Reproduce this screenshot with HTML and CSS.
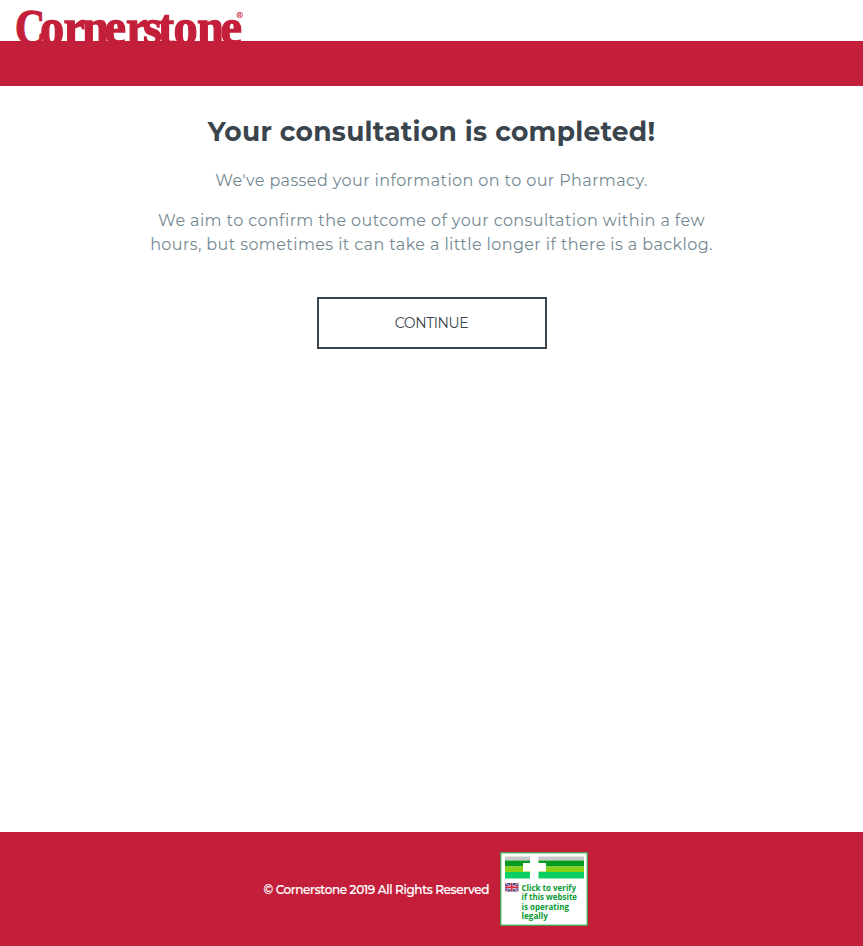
FILE: index.html
```html
<!DOCTYPE html>
<html lang="en">
<head>
<meta charset="utf-8">
<title>Cornerstone</title>
<link rel="stylesheet" href="styles.css">
</head>
<body>
<header class="header">
  <svg class="logo" width="240" height="41" viewBox="0 0 240 41" role="img" aria-label="Cornerstone">
    <text class="wordmark" transform="scale(.82 1)" x="13.500" y="43.500">C</text>
    <text class="wordmark" transform="scale(.95 1)" y="43.500" x="37.900 62.700 82.100 105.800 128.400 146.300 162.200 178.500 203.200 228">ornerstone</text>
    <circle class="registered-ring" cx="235.700" cy="15" r="2.800"/>
    <text class="registered" x="235.700" y="16.800">R</text>
  </svg>
</header>
<div class="band"></div>
<main class="content">
  <h1 class="title">Your consultation is completed!</h1>
  <p class="lead">We've passed your information on to our Pharmacy.</p>
  <p class="lead">We aim to confirm the outcome of your consultation within a few<br>hours, but sometimes it can take a little longer if there is a backlog.</p>
  <button class="continue" type="button">CONTINUE</button>
</main>
<footer class="footer">
  <span class="copyright">© Cornerstone 2019 All Rights Reserved</span>
  <svg class="badge" width="88" height="74" viewBox="0 0 88 74">
    <rect x=".75" y=".75" width="86.500" height="72.500" fill="#fff" stroke="#35a84a" stroke-width="1.200"/>
    <path fill="#c8c9c8" d="M5 4.500h79v4H5z"/>
    <path fill="#079a21" d="M5 8.500h79v6H5z"/>
    <path fill="#86d016" d="M5 14.500h79v5.500H5z"/>
    <path fill="#08cf61" d="M5 20h79v6.500H5z"/>
    <path fill="#fff" d="M30 4h8.500v7H46v8.500h-7.500V27H30v-7.500h-7V11h7z"/>
    <path fill="#34458f" d="M5 31h13.500v8.500H5z"/>
    <path stroke="#fff" stroke-width="1.200" d="m5 31 13.500 8.500M18.500 31 5 39.500"/>
    <path stroke="#d53b4d" stroke-width=".7" d="m5 31 13.500 8.500M18.500 31 5 39.500"/>
    <path stroke="#f3dde2" stroke-width="2.400" d="M11.750 31v8.500M5 35.250h13.500"/>
    <path stroke="#d32c40" stroke-width="1.500" d="M11.750 31v8.500M5 35.250h13.500"/>
    <g class="badge-text">
      <text x="21.500" y="38.500" textLength="54.500" lengthAdjust="spacingAndGlyphs">Click to verify</text>
      <text x="21.500" y="48" textLength="55.500" lengthAdjust="spacingAndGlyphs">if this website</text>
      <text x="21.500" y="57.500" textLength="47.500" lengthAdjust="spacingAndGlyphs">is operating</text>
      <text x="21.500" y="67" textLength="26.500" lengthAdjust="spacingAndGlyphs">legally</text>
    </g>
  </svg>
</footer>
</body>
</html>
```
FILE: styles.css
```css
* { box-sizing: border-box; }
body {
  margin: 0;
  min-height: 946px;
  display: flex;
  flex-direction: column;
  background: #fff;
  color: #3a444c;
  font-family: Montserrat, Inter, sans-serif;
}
.header { height: 41px; padding-left: 4px; }
.logo { display: block; overflow: visible; }
.wordmark {
  font: bold 51px "Liberation Serif", serif;
  fill: #c41f3a;
  stroke: #c41f3a;
  stroke-width: 1.3px;
}
.registered { font: bold 4.5px "Liberation Sans", sans-serif; fill: #c41f3a; text-anchor: middle; }
.registered-ring { fill: none; stroke: #c41f3a; stroke-width: .7px; }
.band { height: 45px; background: #c41f3a; }
.content {
  flex: 1;
  display: flex;
  flex-direction: column;
  align-items: center;
  padding-top: 30px;
  text-align: center;
}
.title {
  margin: 0 0 21px;
  font-size: 26.5px;
  line-height: 32px;
  font-weight: 700;
  letter-spacing: .27px;
  white-space: nowrap;
}
.lead {
  margin: 0 0 16px;
  color: #748992;
  font-size: 16px;
  line-height: 24px;
  font-weight: 400;
  letter-spacing: .4px;
  white-space: nowrap;
}
.continue {
  width: 230px;
  height: 52px;
  margin-top: 24px;
  padding: 0;
  border: 2px solid #3a444c;
  background: #fff;
  color: #3a444c;
  font: 400 14px Montserrat, Inter, sans-serif;
  letter-spacing: -.4px;
}
.footer {
  height: 114px;
  display: flex;
  align-items: center;
  justify-content: center;
  gap: 11px;
  padding-right: 12px;
  background: #c41f3a;
  color: #fff;
}
.copyright {
  width: 225px;
  white-space: nowrap;
  font-size: 12px;
  font-weight: 500;
  letter-spacing: -.36px;
  -webkit-text-stroke: .2px #fff;
}
.badge-text { font: bold 8.6px "Open Sans", sans-serif; fill: #079b31; }
```
